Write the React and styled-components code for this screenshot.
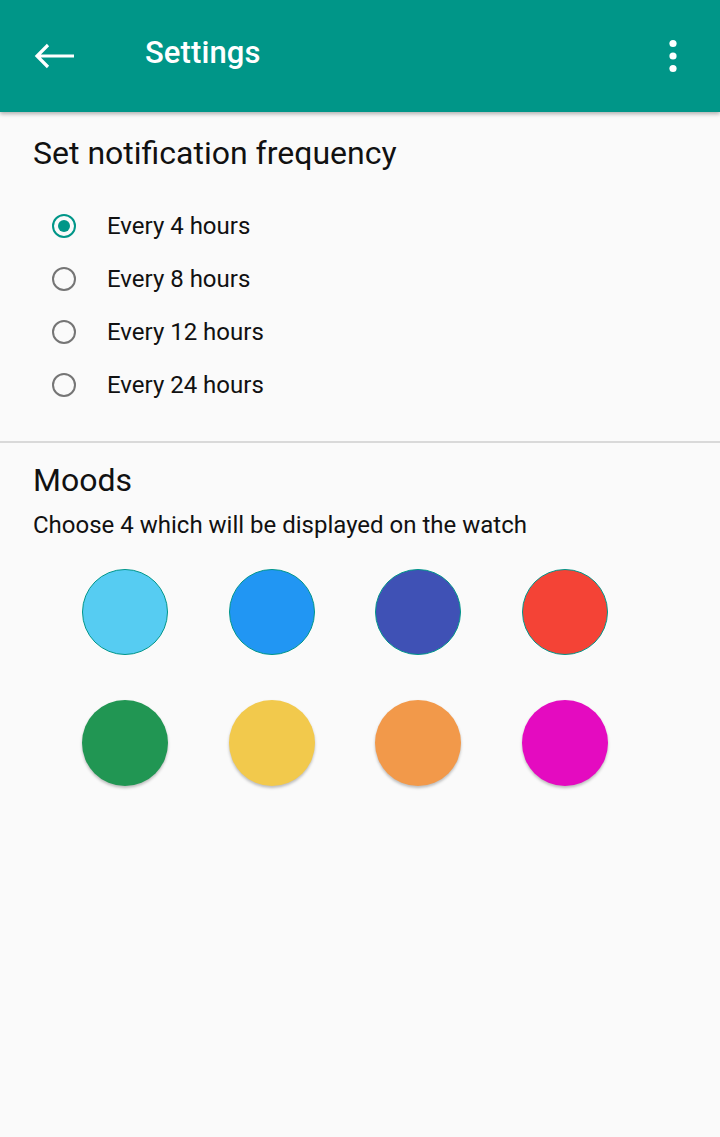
import React, { useState } from 'react'
import styled, { createGlobalStyle } from 'styled-components'

const GlobalStyle = createGlobalStyle`
  html, body {
    margin: 0;
    padding: 0;
    background: #fafafa;
  }
  body {
    font-family: Roboto, "Noto Sans", Arial, sans-serif;
    color: #212121;
  }
`

const Screen = styled.div`
  display: flex;
  flex-direction: column;
  min-height: 1137px;
  background: #fafafa;
`

const AppBar = styled.header`
  display: flex;
  align-items: center;
  height: 112px;
  padding: 0 42px 0 34px;
  box-sizing: border-box;
  background-color: #009688;
  color: white;
  box-shadow: 0 2px 4px rgba(0, 0, 0, 0.3);
  position: relative;
  z-index: 1;
`

const IconButton = styled.button`
  display: flex;
  align-items: center;
  justify-content: center;
  background: none;
  border: none;
  padding: 0;
  color: white;
  cursor: pointer;
`

const Title = styled.h1`
  flex-grow: 1;
  margin: 0 0 8px 69px;
  font-size: 31px;
  font-weight: 500;
  letter-spacing: 0.1px;
`

const Section = styled.section`
  padding: ${props => props.$pad || '0 33px'};
  border-bottom: ${props => props.$divider ? '2px solid #d9d9d9' : 'none'};
`

const Heading = styled.h2`
  margin: 0;
  font-size: 32px;
  font-weight: 400;
  color: #111;
`

const Hint = styled.p`
  margin: 12px 0 0;
  font-size: 24px;
  color: #111;
`

const RadioList = styled.div`
  display: flex;
  flex-direction: column;
  margin-top: 27px;
  padding-left: 19px;
`

const RadioRow = styled.label`
  display: flex;
  align-items: center;
  height: 53px;
  font-size: 24px;
  color: #111;
  cursor: pointer;
`

const RadioCircle = styled.span`
  display: flex;
  align-items: center;
  justify-content: center;
  width: 24px;
  height: 24px;
  box-sizing: border-box;
  border-radius: 50%;
  border: 2px solid ${props => props.$checked ? '#009688' : '#757575'};
  margin-right: 31px;

  &::after {
    content: '';
    width: 12px;
    height: 12px;
    border-radius: 50%;
    background: ${props => props.$checked ? '#009688' : 'transparent'};
  }
`

const MoodGrid = styled.div`
  display: grid;
  grid-template-columns: repeat(4, 146.5px);
  row-gap: 45px;
  margin: 30px 0 0 19px;
`

const Mood = styled.button`
  justify-self: center;
  width: 86px;
  height: 86px;
  padding: 0;
  border-radius: 50%;
  background: ${props => props.$color};
  border: ${props => props.$selected ? '1px solid #00968a' : 'none'};
  box-shadow: ${props => props.$selected ? 'none' : '0 2px 3px rgba(0, 0, 0, 0.25)'};
  cursor: pointer;
`

const options = ['Every 4 hours', 'Every 8 hours', 'Every 12 hours', 'Every 24 hours']

const moods = [
  '#56ccf2', '#2196f3', '#3f51b5', '#f44336',
  '#219653', '#f2c94c', '#f2994a', '#e40bc0',
]

function App() {
  const [freq, setFreq] = useState(0)
  const [picked, setPicked] = useState([0, 1, 2, 3])

  const toggle = i => setPicked(p => p.includes(i) ? p.filter(x => x !== i) : [...p, i].slice(-4))

  return (
    <Screen>
      <GlobalStyle />
      <AppBar>
        <IconButton aria-label="Back">
          <svg width="42" height="26" viewBox="0 0 42 26">
            <path d="M3 13H40M14 2L3 13L14 24" fill="none" stroke="white" strokeWidth="3.2" />
          </svg>
        </IconButton>
        <Title>Settings</Title>
        <IconButton aria-label="More">
          <svg width="10" height="34" viewBox="0 0 10 34">
            <circle cx="5" cy="4.5" r="3.6" fill="white" />
            <circle cx="5" cy="17" r="3.6" fill="white" />
            <circle cx="5" cy="29.5" r="3.6" fill="white" />
          </svg>
        </IconButton>
      </AppBar>

      <Section $pad="22px 33px 30px" $divider>
        <Heading>Set notification frequency</Heading>
        <RadioList>
          {options.map((o, i) => (
            <RadioRow key={o} onClick={() => setFreq(i)}>
              <RadioCircle $checked={freq === i} />
              {o}
            </RadioRow>
          ))}
        </RadioList>
      </Section>

      <Section $pad="18px 33px">
        <Heading>Moods</Heading>
        <Hint>Choose 4 which will be displayed on the watch</Hint>
        <MoodGrid>
          {moods.map((c, i) => (
            <Mood key={c} $color={c} $selected={picked.includes(i)} onClick={() => toggle(i)} />
          ))}
        </MoodGrid>
      </Section>
    </Screen>
  )
}

export default App
